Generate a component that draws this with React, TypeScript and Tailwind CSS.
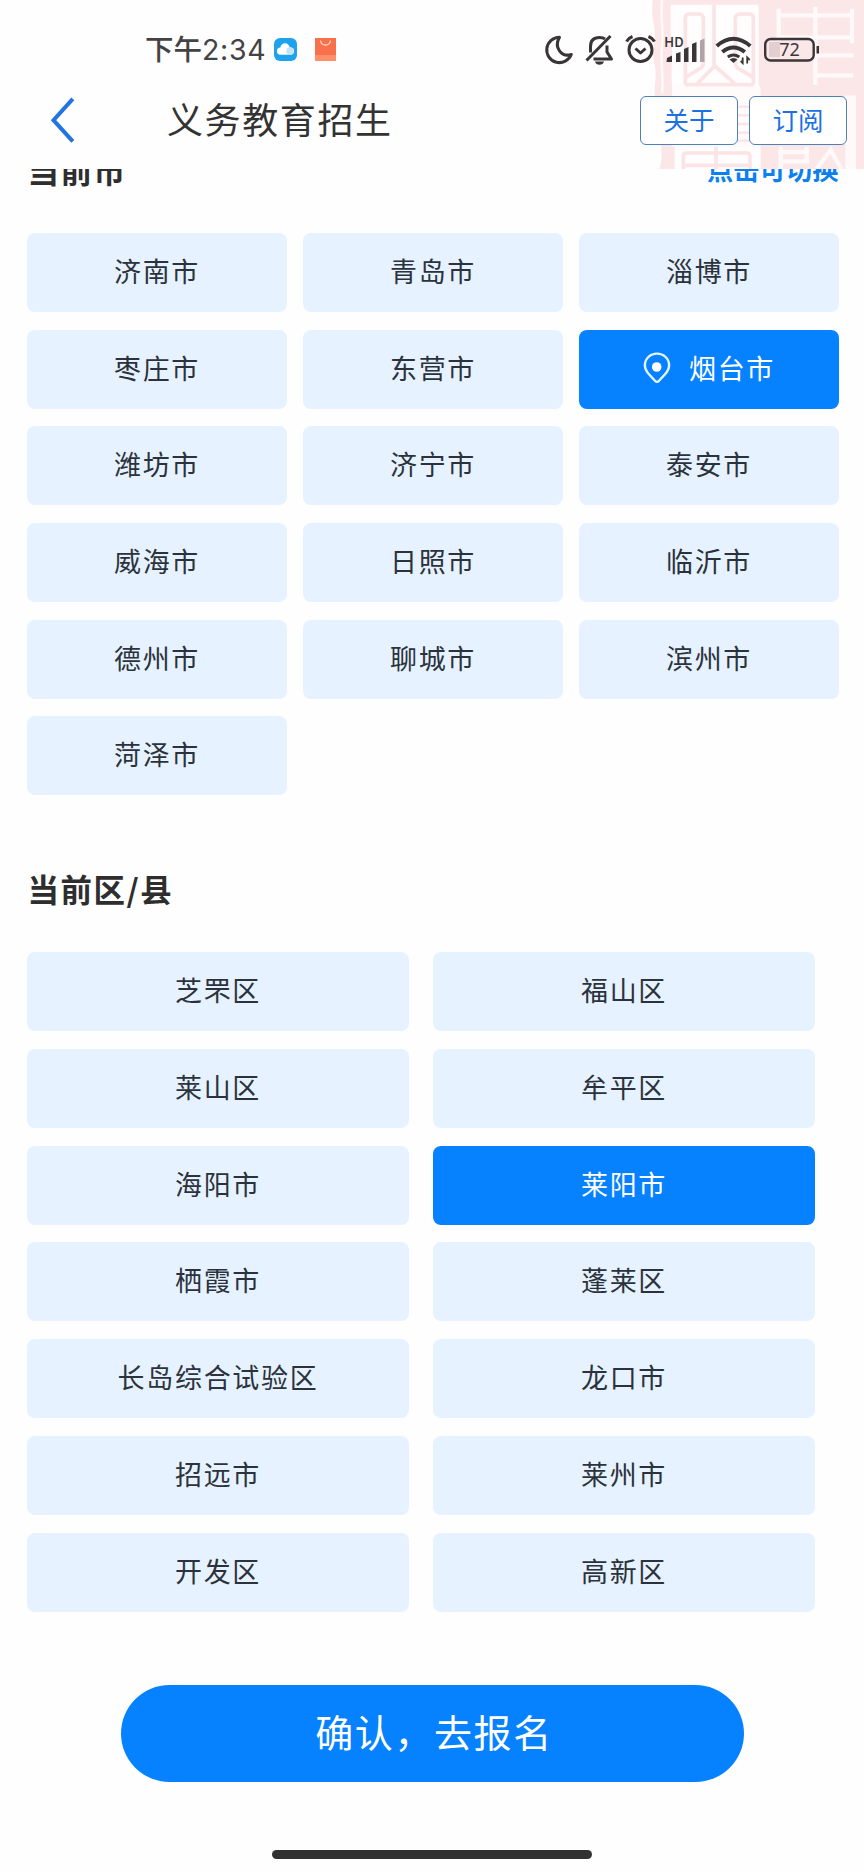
import clsx from 'clsx';

const cities = [
  '济南市', '青岛市', '淄博市',
  '枣庄市', '东营市', '烟台市',
  '潍坊市', '济宁市', '泰安市',
  '威海市', '日照市', '临沂市',
  '德州市', '聊城市', '滨州市',
  '菏泽市',
];

const districts = [
  '芝罘区', '福山区',
  '莱山区', '牟平区',
  '海阳市', '莱阳市',
  '栖霞市', '蓬莱区',
  '长岛综合试验区', '龙口市',
  '招远市', '莱州市',
  '开发区', '高新区',
];

function PinIcon() {
  return (
    <svg viewBox="0 0 28 32" className="mt-[2px] mr-[18px] h-8 w-7" fill="none">
      <path
        d="M14 1.6C7.2 1.6 1.9 6.8 1.9 13.2c0 3.8 1.8 6.6 4.3 9.3l6 6.5c1 1.1 2.6 1.1 3.6 0l6-6.5c2.5-2.7 4.3-5.5 4.3-9.3C26.1 6.8 20.8 1.6 14 1.6Z"
        stroke="#e4f6ff"
        strokeWidth="2.4"
      />
      <circle cx="13.7" cy="15" r="4.8" fill="#fff" />
    </svg>
  );
}

function Tile({ label, active, pin }: { label: string; active: boolean; pin?: boolean }) {
  return (
    <button
      className={clsx(
        'flex h-[79px] items-center justify-center rounded-lg pb-[4px] pl-[1px] text-[27px] leading-none tracking-[1.7px]',
        active ? 'bg-[#0681ff] text-white' : 'bg-[#e6f2ff] text-[#2c323b]',
      )}
    >
      {pin && <PinIcon />}
      {label}
    </button>
  );
}

function Stamp() {
  return (
    <svg viewBox="0 0 672 507" className="absolute right-0 top-0 h-[169px] w-[224px]" fill="none">
      {/* outer border of the seal */}
      <path d="M38 0h634v507H58c14-40 0-66 8-100 4-50-22-90-22-130 0-30 8-60-2-90-8-40 8-70 0-110-6-30-6-50-4-77Z" fill="#fbe6e8" />
      <path d="M66 0c-6 50 6 90 0 140s6 90 0 140" stroke="#fff" strokeWidth="8" opacity=".7" />
      <path d="M92 14h262q2 6 2 12v244H98c-8-50 2-100-4-150-4-40-2-70-2-106Z" fill="#fffdfd" />
      <path d="M356 250h-260v190h266V270Z" fill="#fffbfb" />
      <path d="M104 440h258v67H104Z" fill="#fffdfd" />

      {/* left characters */}
      <g stroke="#fae4e6" strokeWidth="11" strokeLinejoin="round">
        <path d="M136 254V54q0-12 12-12h28q14 0 14 14v132q0 14-14 20l-40 24" />
        <path d="M340 254V54q0-12-12-12h-28q-14 0-14 14v132q0 14 14 20l40 24" />
        <path d="M222 14v182M136 254h204M172 250l52-52 60 52" />
        <path d="M290 320h60M290 346h60M290 372h60M290 398h60M290 422h60" strokeWidth="7" />
        <path d="M130 507v-38q0-10 10-10h180q10 0 10 10v38M228 440v67M130 496h200" />
      </g>

      {/* right characters */}
      <g stroke="#fff9f9" strokeWidth="13">
        <path d="M416 26v96M636 26v104M410 46h230M416 112h220M526 20v234M520 166h120M520 226h120" />
        <path d="M422 440v67M418 456h90M424 484h84M500 440v50M530 507l42-58 32 58" />
      </g>
      <path d="M616 286h32v221h-32z" fill="#fff9f9" />
    </svg>
  );
}

function StatusIcons() {
  return (
    <svg viewBox="540 28 284 42" className="absolute left-[540px] top-[28px] h-[42px] w-[284px]" fill="none">
      <g stroke="#3a3638" strokeWidth="3" strokeLinejoin="round">
        <path d="M559.5 37.2A12.700 12.700 0 1 0 571.300 54.500C561.500 57.500 553.500 47.500 559.500 37.200Z" />
        {/* muted bell */}
        <path d="M586.500 60.500l24-24.500" />
        <path d="M590.500 52.500V46.500q0-9 9-9 3.500 0 5.500 1.500M607 45.500v6.500l4.500 7h-18" />
        {/* alarm clock */}
        <circle cx="640.500" cy="50" r="11.500" />
        <path d="M635.500 48.500l5 4.500 5-4.500M626.500 41.500q2-3.500 6-5M654.500 41.500q-2-3.500-6-5" />
      </g>
      <path d="M595 61.500h9q-1 3.200-4.500 3.200t-4.500-3.200Z" fill="#3a3638" />

      <text x="664.500" y="46.500" fontSize="12.500" fontWeight="600" fill="#3a3638" className="font-['Inter',sans-serif]" textLength="19">HD</text>
      <g fill="#3a3638">
        <path d="M667 58l5-2.500V62h-5.500ZM676 53.500l4.500-1.500v10H676ZM684 49l4.500-2v15H684ZM692 44l4.500-2v20H692Z" />
        <path d="M700 40.500l4.500-2V62H700Z" fill="#b3a2a5" />
      </g>

      <g stroke="#3a3638" strokeWidth="4">
        <path d="M716.800 46q16.500-14.500 33.500 0" />
        <path d="M722.300 52q11-9 22.500 0" />
        <path d="M727.800 57q5.700-4 11.500 0" strokeWidth="3" />
      </g>
      <path d="M729.500 59.500q4-3 8 0l-4 3.500Z" fill="#3a3638" />
      <path d="M742.700 57.500v5.500l-2-2M747.200 63.500v-6l2.500 2.500" stroke="#3a3638" strokeWidth="1.800" />

      <rect x="769" y="42" width="11" height="15" fill="#e3cfd2" />
      <rect x="765.200" y="39" width="48.500" height="21.500" rx="5.500" stroke="#3a3638" strokeWidth="2.400" />
      <path d="M816.500 46h2.500v7.500h-2.500z" fill="#3a3638" />
      <text x="789.500" y="56.400" fontSize="18" textAnchor="middle" fill="#3a3638" className="font-['Noto_Sans',sans-serif]">72</text>
    </svg>
  );
}

function StatusBar() {
  return (
    <div className="relative flex h-[99px] items-center pl-[145px]">
      <span className="text-[28.500px] font-medium leading-none text-[#434343]">
        下午<span className="font-['Inter','Noto_Sans_CJK_SC',sans-serif] font-normal tracking-[0.7px]">2:34</span>
      </span>
      <svg viewBox="0 0 62 23" className="absolute left-[274px] top-[38px] h-[23px] w-[62px]">
        <rect width="23" height="23" rx="6" fill="#1ea2ee" />
        <circle cx="11" cy="10" r="4.700" fill="#fff" />
        <path d="M6.500 9.500a3.600 3.600 0 0 0 0 7.200h10a3.600 3.600 0 0 0 0-7.200Z" fill="#fff" />
        <circle cx="16" cy="13" r="3.700" fill="#c3e4f8" />
        <path d="M41 0h21v23H41z" fill="#f9714c" />
        <path d="M41 17h21v6H41z" fill="#ff8f6a" />
        <path d="M46.500 2.500q.5 4.500 5 4.500t5-4.500" fill="none" stroke="#ffd9b8" strokeWidth="1.300" />
      </svg>
      <StatusIcons />
    </div>
  );
}

function NavBar() {
  return (
    <div className="relative flex h-[70px] items-start pl-[50px] pr-[17px]">
      <svg viewBox="0 0 26 46" className="-mt-[2px] h-[46px] w-[26px]" fill="none">
        <path d="M22.800 1.800L3.500 23.200 22.800 44.300" stroke="#2274e5" strokeWidth="4" />
      </svg>
      <h1 className="ml-[91px] mt-[1px] text-[36px] leading-[36px] tracking-[1.600px] text-[#333]">义务教育招生</h1>
      <div className="-mt-[3px] ml-auto flex gap-[11px]">
        {['关于', '订阅'].map((label) => (
          <button
            key={label}
            className="h-[49px] w-[98px] rounded-md border border-[#4b81b8] bg-white pb-[4px] text-[25.500px] leading-none text-[#1b70e4]"
          >
            {label}
          </button>
        ))}
      </div>
    </div>
  );
}

export default function App() {
  return (
    <div className="flex h-[1872px] w-[864px] flex-col overflow-hidden bg-[#fefefe] font-['Noto_Sans_CJK_SC',sans-serif]">
      <header className="relative h-[169px] shrink-0">
        <Stamp />
        <StatusBar />
        <NavBar />
      </header>

      {/* the list is scrolled a little, so its first heading slides under the header */}
      <main className="flex-1 overflow-hidden">
        <section className="-mt-[18px] pl-[26.5px] pr-[25.5px]">
          <div className="flex h-10 items-center justify-between">
            <h2 className="pb-[2px] pl-[1px] text-[31.500px] font-bold leading-none tracking-[1.500px] text-[#2e2e2e]">当前市</h2>
            <span className="pb-[3px] text-[26.300px] font-bold leading-none text-[#0d7fee]">点击可切换</span>
          </div>
          <div className="mt-[42px] grid grid-cols-3 gap-x-4 gap-y-[17.700px]">
            {cities.map((city) => (
              <Tile key={city} label={city} active={city === '烟台市'} pin={city === '烟台市'} />
            ))}
          </div>
        </section>

        <section className="mt-[74.5px] pl-[26.5px] pr-[49.5px]">
          <h2 className="flex h-10 items-center pb-[2px] pl-[1px] text-[31.500px] font-bold leading-none tracking-[1.500px] text-[#2e2e2e]">
            当前区/县
          </h2>
          <div className="mt-[42px] grid grid-cols-2 gap-x-6 gap-y-[17.850px]">
            {districts.map((district) => (
              <Tile key={district} label={district} active={district === '莱阳市'} />
            ))}
          </div>
        </section>

        <button className="mx-auto mt-[72.5px] flex h-[97px] w-[623px] items-center justify-center rounded-full bg-[#0681ff] pb-[4px] pl-[4px] text-[38px] leading-none tracking-[1.600px] text-white">
          确认，去报名
        </button>
        <div className="mx-auto mt-[68px] h-[9px] w-[320px] rounded-full bg-[#313131]" />
      </main>
    </div>
  );
}
